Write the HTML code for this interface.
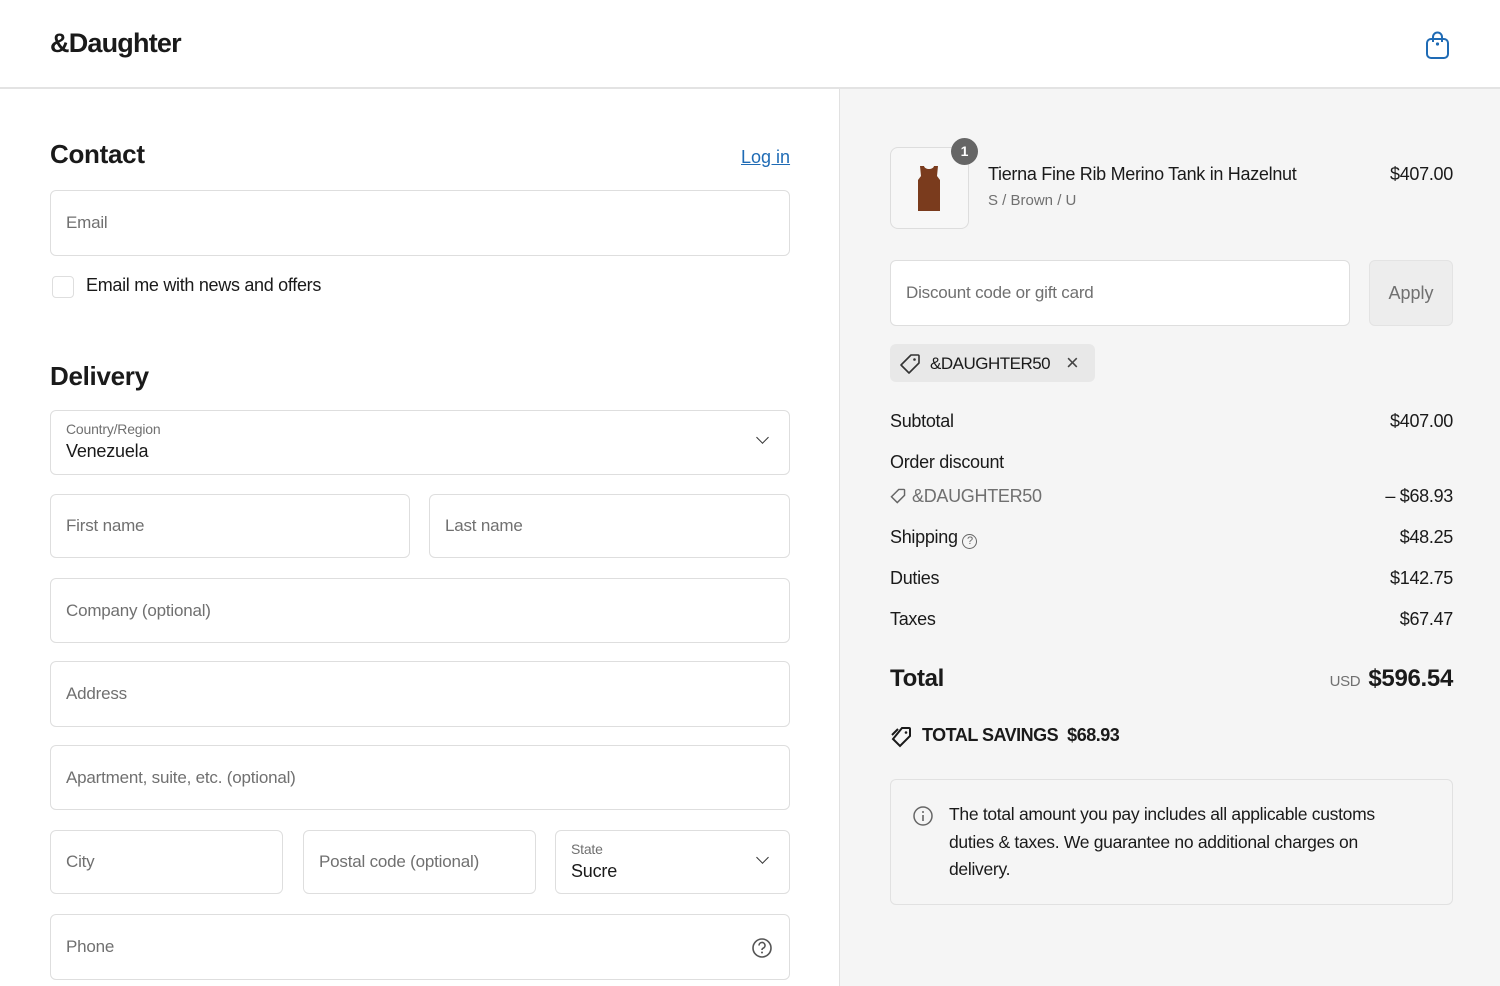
<!DOCTYPE html>
<html><head><meta charset="utf-8"><style>
*{box-sizing:border-box;margin:0;padding:0}
body{width:1500px;height:986px;overflow:hidden;font-family:"Liberation Sans",sans-serif;color:#1a1a1a;background:#fff;position:relative;font-size:17px}
.a{position:absolute}
.hdr{left:0;top:0;width:1500px;height:89px;border-bottom:2px solid #e3e3e3;background:#fff}
.logo{left:50px;top:28px;font-size:27px;font-weight:bold;letter-spacing:-0.8px}
.right{left:839px;top:89px;width:661px;height:897px;background:#f5f5f5;border-left:1px solid #e1e1e1}
.inp{position:absolute;border:1.5px solid #dedede;border-radius:6px;background:#fff;color:#707070;font-size:17px;padding-left:15px;display:flex;align-items:center;letter-spacing:-0.2px}
h2{position:absolute;font-size:26px;font-weight:bold;letter-spacing:-0.3px}
.lbl{font-size:14px;color:#707070;position:absolute;left:15px;top:10px}
.val{position:absolute;left:15px;top:30px;color:#1a1a1a;font-size:18px}
.chev{position:absolute;right:22px;top:22px;width:9px;height:9px;border-right:1.8px solid #333;border-bottom:1.8px solid #333;transform:rotate(45deg)}
.row{position:absolute;left:890px;width:563px;font-size:18px;display:flex;justify-content:space-between;letter-spacing:-0.3px}
</style></head><body>
<div class="a hdr"></div>
<div class="a logo">&amp;Daughter</div>
<svg class="a" style="left:1424px;top:30px" width="28" height="30" viewBox="0 0 28 30"><rect x="3" y="9" width="21" height="19" rx="4" fill="none" stroke="#1f6bb5" stroke-width="2"/><path d="M9 12V7a4.5 4.5 0 0 1 9 0v5" fill="none" stroke="#1f6bb5" stroke-width="2"/><circle cx="13.5" cy="14" r="1.6" fill="#1f6bb5"/></svg>

<h2 style="left:50px;top:139px">Contact</h2>
<div class="a" style="left:741px;top:147px;color:#1f6bb5;text-decoration:underline;font-size:18px">Log in</div>
<div class="inp" style="left:50px;top:190px;width:740px;height:66px">Email</div>
<div class="a" style="left:52px;top:276px;width:22px;height:22px;border:1.5px solid #dedede;border-radius:4px;background:#fff"></div>
<div class="a" style="left:86px;top:275px;font-size:18px;letter-spacing:-0.3px">Email me with news and offers</div>

<h2 style="left:50px;top:361px">Delivery</h2>
<div class="inp" style="left:50px;top:410px;width:740px;height:65px"><span class="lbl">Country/Region</span><span class="val">Venezuela</span><span class="chev"></span></div>
<div class="inp" style="left:50px;top:494px;width:360px;height:64px">First name</div>
<div class="inp" style="left:429px;top:494px;width:361px;height:64px">Last name</div>
<div class="inp" style="left:50px;top:578px;width:740px;height:65px">Company (optional)</div>
<div class="inp" style="left:50px;top:661px;width:740px;height:66px">Address</div>
<div class="inp" style="left:50px;top:745px;width:740px;height:65px">Apartment, suite, etc. (optional)</div>
<div class="inp" style="left:50px;top:830px;width:233px;height:64px">City</div>
<div class="inp" style="left:303px;top:830px;width:233px;height:64px">Postal code (optional)</div>
<div class="inp" style="left:555px;top:830px;width:235px;height:64px"><span class="lbl">State</span><span class="val">Sucre</span><span class="chev"></span></div>
<div class="inp" style="left:50px;top:914px;width:740px;height:66px">Phone<svg style="position:absolute;right:16px;top:22px" width="22" height="22" viewBox="0 0 22 22"><circle cx="11" cy="11" r="9" fill="none" stroke="#555" stroke-width="1.6"/><path d="M8 8.5a3 3 0 1 1 4 2.8c-.8.4-1 .9-1 1.7" fill="none" stroke="#555" stroke-width="1.6"/><circle cx="11" cy="15.5" r="1" fill="#555"/></svg></div>

<div class="a right"></div>
<div class="a" style="left:890px;top:147px;width:79px;height:82px;border:1.5px solid #ddd;border-radius:8px;background:#f7f7f7"></div>
<svg class="a" style="left:916px;top:164px" width="26" height="48" viewBox="0 0 26 48"><path d="M4 2h4c1 4 9 4 10 0h4l-1 10 3 4v31H2V16l3-4z" fill="#7a3b1d"/></svg>
<div class="a" style="left:951px;top:138px;width:27px;height:27px;border-radius:50%;background:#666;color:#fff;font-size:14px;font-weight:bold;text-align:center;line-height:27px">1</div>
<div class="a" style="left:988px;top:164px;font-size:18px;letter-spacing:-0.3px">Tierna Fine Rib Merino Tank in Hazelnut</div>
<div class="a" style="left:988px;top:192px;font-size:15px;color:#707070">S / Brown / U</div>
<div class="a" style="left:1390px;top:164px;font-size:18px;letter-spacing:-0.3px">$407.00</div>
<div class="inp" style="left:890px;top:260px;width:460px;height:66px">Discount code or gift card</div>
<div class="a" style="left:1369px;top:260px;width:84px;height:66px;border:1.5px solid #e3e3e3;border-radius:6px;background:#ededed;color:#707070;font-size:18px;text-align:center;line-height:64px">Apply</div>
<div class="a" style="left:890px;top:344px;width:205px;height:38px;background:#e8e8e8;border-radius:6px"></div>
<svg class="a" style="left:899px;top:353px" width="22" height="22" viewBox="0 0 22 22"><path d="M12 2h7a1 1 0 0 1 1 1v7L10 20 2 12z" fill="none" stroke="#333" stroke-width="1.6" stroke-linejoin="round"/><circle cx="15.5" cy="6.5" r="1.3" fill="#333"/></svg>
<div class="a" style="left:930px;top:354px;font-size:17px;letter-spacing:-0.5px">&amp;DAUGHTER50</div>
<div class="a" style="left:1066px;top:350px;font-size:22px;color:#444">×</div>

<div class="row" style="top:411px"><span>Subtotal</span><span>$407.00</span></div>
<div class="row" style="top:452px"><span>Order discount</span></div>
<div class="row" style="top:486px;color:#707070"><span><svg width="16" height="16" viewBox="0 0 22 22" style="vertical-align:-2px;margin-right:6px"><path d="M12 2h7a1 1 0 0 1 1 1v7L10 20 2 12z" fill="none" stroke="#666" stroke-width="2"/></svg>&amp;DAUGHTER50</span><span style="color:#1a1a1a">– $68.93</span></div>
<div class="row" style="top:527px"><span>Shipping <span style="display:inline-block;width:15px;height:15px;border:1.4px solid #666;border-radius:50%;font-size:11px;text-align:center;line-height:13px;color:#666;vertical-align:-1px">?</span></span><span>$48.25</span></div>
<div class="row" style="top:568px"><span>Duties</span><span>$142.75</span></div>
<div class="row" style="top:609px"><span>Taxes</span><span>$67.47</span></div>
<div class="row" style="top:665px;font-size:24px;font-weight:bold;align-items:baseline"><span>Total</span><span><span style="font-size:15px;font-weight:normal;color:#707070;margin-right:8px">USD</span>$596.54</span></div>
<svg class="a" style="left:890px;top:725px" width="24" height="24" viewBox="0 0 24 24"><path d="M12 3h7a1 1 0 0 1 1 1v7L10 21 3 14z" fill="none" stroke="#1a1a1a" stroke-width="2"/><path d="M8 4 2 10" stroke="#1a1a1a" stroke-width="2"/><circle cx="16" cy="7.5" r="1.3" fill="#1a1a1a"/></svg>
<div class="a" style="left:922px;top:725px;font-size:18px;font-weight:bold;letter-spacing:-0.5px">TOTAL SAVINGS&nbsp; $68.93</div>
<div class="a" style="left:890px;top:779px;width:563px;height:126px;border:1.5px solid #e1e1e1;border-radius:6px"></div>
<svg class="a" style="left:912px;top:805px" width="22" height="22" viewBox="0 0 22 22"><circle cx="11" cy="11" r="9" fill="none" stroke="#666" stroke-width="1.5"/><path d="M11 10v6" stroke="#666" stroke-width="1.6"/><circle cx="11" cy="7" r="1" fill="#666"/></svg>
<div class="a" style="left:949px;top:801px;width:455px;font-size:17.5px;line-height:27.5px;letter-spacing:-0.3px">The total amount you pay includes all applicable customs duties &amp; taxes. We guarantee no additional charges on delivery.</div>
</body></html>
